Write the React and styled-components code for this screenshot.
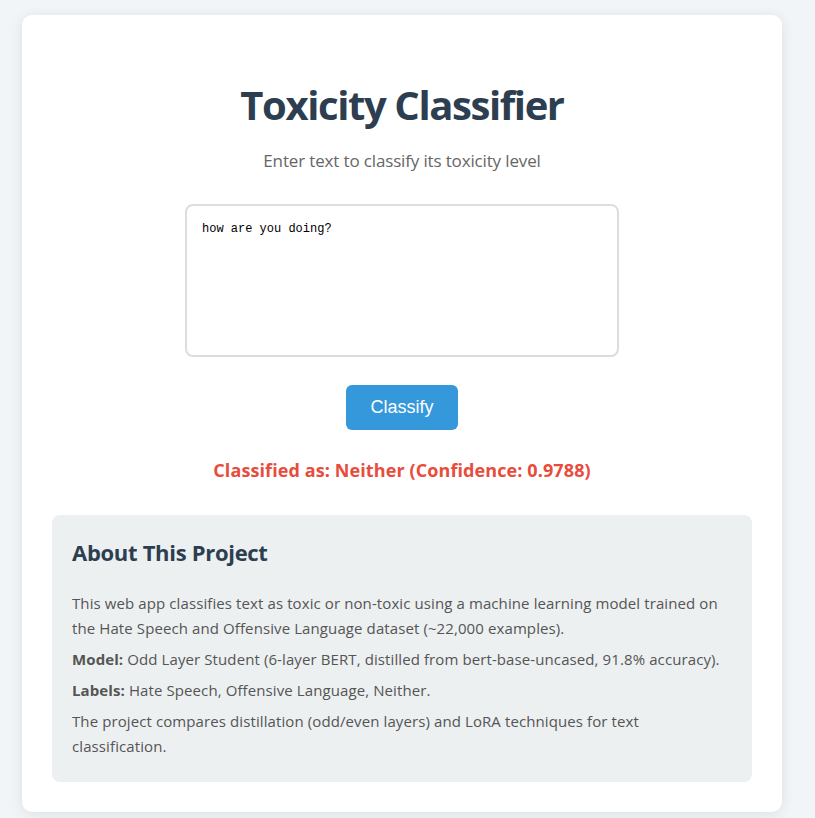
import React, { useState } from "react";
import styled, { createGlobalStyle } from "styled-components";

const GlobalStyle = createGlobalStyle`
  html, body {
    margin: 0;
    padding: 0;
    background: #f2f5f8;
  }
  body {
    font-family: "Open Sans", "Noto Sans", sans-serif;
  }
`;

const Page = styled.div`
  padding: 15px 0 6px 22px;
`;

const Card = styled.main`
  width: 760px;
  box-sizing: border-box;
  background: #fff;
  border-radius: 10px;
  box-shadow: 0 2px 14px rgba(0, 0, 0, 0.09);
  padding: 64px 30px 30px;
  display: flex;
  flex-direction: column;
  align-items: center;
`;

const Title = styled.h1`
  margin: 0;
  font-size: 40px;
  line-height: 52px;
  font-weight: 700;
  color: #2c3e50;
  letter-spacing: -1.4px;
`;

const Subtitle = styled.p`
  margin: 18px 0 0;
  font-size: 17px;
  line-height: 24px;
  color: #666;
  letter-spacing: -0.15px;
`;

const TextInput = styled.textarea`
  margin-top: 31px;
  width: 434px;
  height: 153px;
  box-sizing: border-box;
  border: 2px solid #ddd;
  border-radius: 8px;
  padding: 15px;
  font-family: "Liberation Mono", "DejaVu Sans Mono", monospace;
  font-size: 12px;
  line-height: 17px;
  color: #000;
  resize: none;
  outline: none;
`;

const ClassifyButton = styled.button`
  margin-top: 28px;
  width: 112px;
  height: 45px;
  border: none;
  border-radius: 6px;
  background: #3498db;
  color: #fff;
  font-family: "Liberation Sans", Arial, sans-serif;
  font-size: 18px;
  cursor: pointer;
`;

const Result = styled.p`
  margin: 28px 0 0;
  font-size: 18px;
  line-height: 24px;
  font-weight: 700;
  color: #e74c3c;
  letter-spacing: 0.1px;
`;

const About = styled.section`
  align-self: stretch;
  margin-top: 33px;
  background: #ecf0f1;
  border-radius: 8px;
  padding: 22px 20px 23px;
`;

const AboutTitle = styled.h2`
  margin: 0 0 24px;
  font-size: 22px;
  line-height: 30px;
  font-weight: 700;
  color: #2c3e50;
  letter-spacing: -0.3px;
`;

const Para = styled.p`
  margin: 0 0 6px;
  font-size: 15px;
  line-height: 25px;
  color: #555;
  letter-spacing: 0.1px;

  &:last-child {
    margin-bottom: 0;
  }

  strong {
    font-weight: 700;
  }
`;

export default function App() {
  const [text, setText] = useState("how are you doing?");
  return (
    <>
      <GlobalStyle />
      <Page>
        <Card>
          <Title>Toxicity Classifier</Title>
          <Subtitle>Enter text to classify its toxicity level</Subtitle>
          <TextInput value={text} onChange={(e) => setText(e.target.value)} />
          <ClassifyButton>Classify</ClassifyButton>
          <Result>Classified as: Neither (Confidence: 0.9788)</Result>
          <About>
            <AboutTitle>About This Project</AboutTitle>
            <Para>
              This web app classifies text as toxic or non-toxic using a machine learning model trained on
              the Hate Speech and Offensive Language dataset (~22,000 examples).
            </Para>
            <Para>
              <strong>Model:</strong> Odd Layer Student (6-layer BERT, distilled from bert-base-uncased, 91.8% accuracy).
            </Para>
            <Para>
              <strong>Labels:</strong> Hate Speech, Offensive Language, Neither.
            </Para>
            <Para>
              The project compares distillation (odd/even layers) and LoRA techniques for text classification.
            </Para>
          </About>
        </Card>
      </Page>
    </>
  );
}
